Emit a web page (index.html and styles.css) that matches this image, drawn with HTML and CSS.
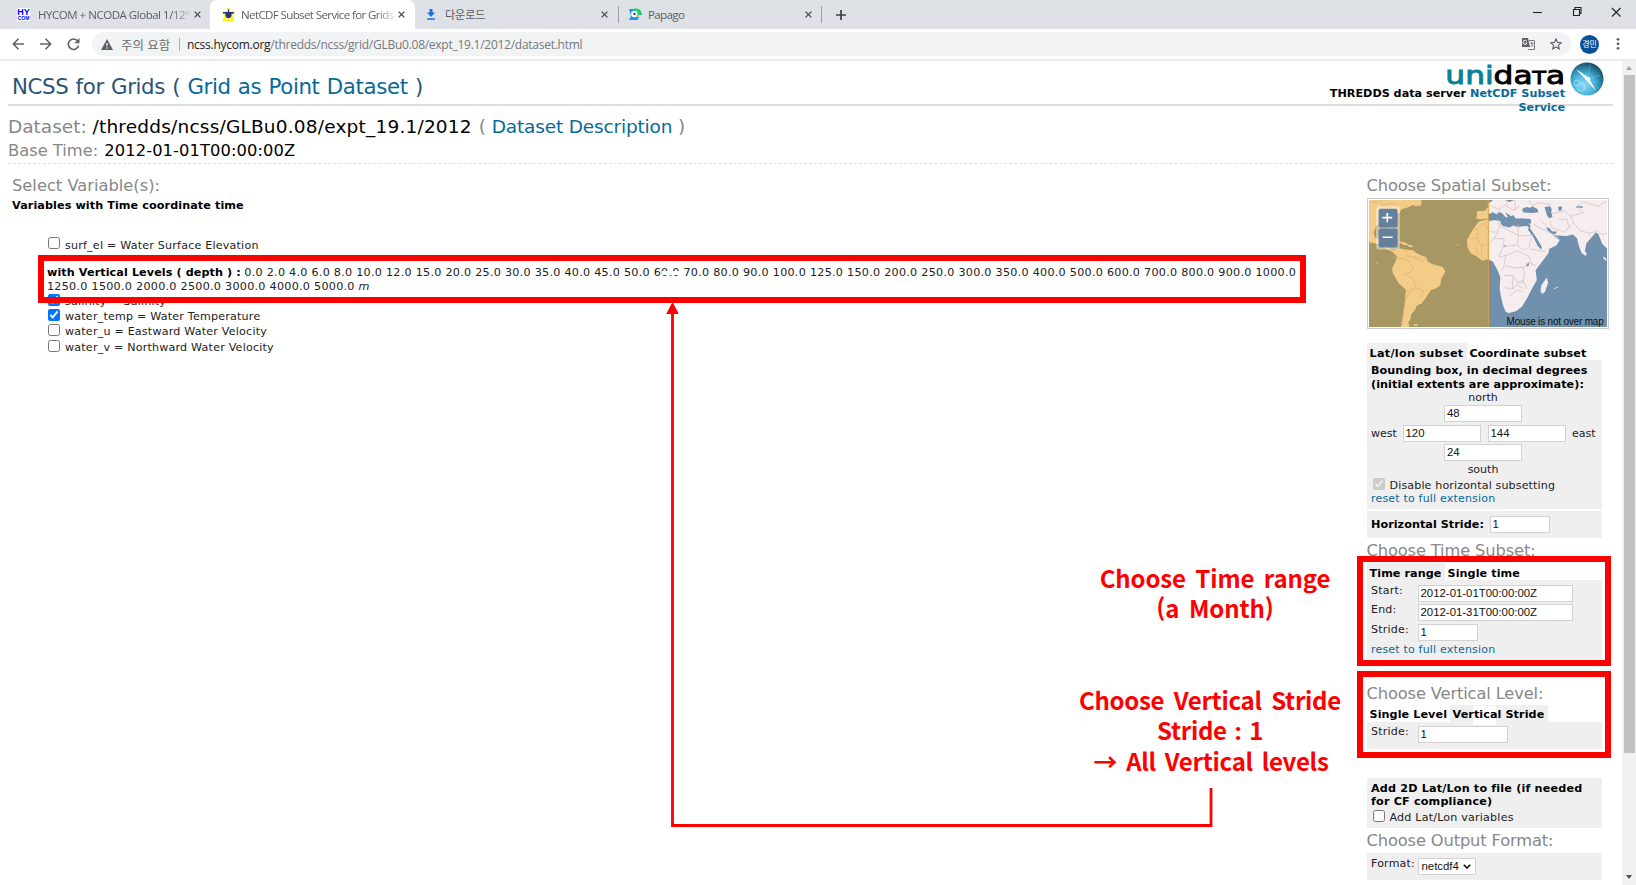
FILE: index.html
```
<!DOCTYPE html>
<html lang="ko">
<head>
<meta charset="utf-8">
<title>NetCDF Subset Service for Grids</title>
<link rel="stylesheet" href="styles.css">
</head>
<body>
<div class="tabstrip">
  <div class="btab first">
    <span class="hy"><b>HY</b><i>COM</i></span>
    <span class="btitle t1">HYCOM + NCODA Global 1/12°</span>
    <svg class="x" viewBox="0 0 8 8"><path d="M.7.7l6.6 6.6M7.3.7L.7 7.3"/></svg>
  </div>
  <div class="btab active">
    <svg class="fav" viewBox="0 0 13 13"><path d="M5 0h3l.5 3.500L13 4l-2.500 3 2 6h-12l2-6L0 4l4.500-.5z" fill="#ffee1c"/><path d="M1 4h11v1.500H9.500v2.500L8 10H5L3.500 8V5.500H1zM6 1.500h1v3H6z" fill="#26308c"/><path d="M4 11h1.500M7.500 11H9" stroke="#fff"/></svg>
    <span class="btitle t2">NetCDF Subset Service for Grids</span>
    <svg class="x" viewBox="0 0 8 8"><path d="M.7.7l6.6 6.6M7.3.7L.7 7.3"/></svg>
  </div>
  <div class="btab third">
    <svg class="dl" viewBox="0 0 8 11"><path d="M2.500 0h3v3.500H8L4 8 0 3.500h2.500zM0 9.300h8v1.500H0z" fill="#1a73e8"/></svg>
    <span class="btitle t3">다운로드</span>
    <svg class="x" viewBox="0 0 8 8"><path d="M.7.7l6.6 6.6M7.3.7L.7 7.3"/></svg>
  </div>
  <div class="btab fourth">
    <svg class="fav" viewBox="0 0 13 13"><path d="M0 1h7c4 0 6 3 5.500 6H9l1 3-2 2H0l2-4z" fill="#1296f8"/><path d="M5 .5c5-.7 8 2 7.500 6.500H7z" fill="#1dd16a"/><circle cx="5.300" cy="6" r="3.200" fill="#fff"/><circle cx="5.500" cy="6" r="1.100" fill="#114"/><path d="M7 7h3.500L8 10z" fill="#ffc400"/></svg>
    <span class="btitle t4">Papago</span>
    <svg class="x" viewBox="0 0 8 8"><path d="M.7.7l6.6 6.6M7.3.7L.7 7.3"/></svg>
  </div>
  <svg class="plus" viewBox="0 0 10 10"><path d="M5 0v10M0 5h10"/></svg>
  <svg class="winbtns" viewBox="0 0 90 12"><path d="M0 6.500h9" /><path d="M40.500 3.500h6v6h-6zM42 3.500v-2h6v6h-1.500"/><path d="M79 2l8.500 8.500M87.500 2L79 10.500"/></svg>
</div>
<div class="toolbar">
  <svg class="nav" viewBox="0 0 80 14"><path d="M12 7H1.500M6.500 1.700L1.300 7l5.200 5.300M28 7h10.500M33.500 1.700L38.700 7l-5.200 5.300"/><path d="M65.800 4.200A5.200 5.200 0 1 0 66.600 8.500"/><path d="M67.500 1v5.300h-5.200z" fill="#5f6368" stroke="none"/></svg>
  <div class="omni">
    <svg class="warn" viewBox="0 0 12 11"><path d="M6 0l6 11H0z" fill="#5f6368"/><path d="M6 4v3M6 8.200v1.200" stroke="#fff" stroke-width="1.200"/></svg>
    <span class="notice">주의 요함</span><span class="sep"></span>
    <span class="url"><b>ncss.hycom.org</b>/thredds/ncss/grid/GLBu0.08/expt_19.1/2012/dataset.html</span>
    <svg class="trans" viewBox="0 0 13 12"><path d="M0 0h6l2 9H0z" fill="#5f6368"/><path d="M7 2.500h5.500v9H6" fill="none" stroke="#777b80"/><path d="M4.800 3.300A2 2 0 1 0 5 5H3.500" fill="none" stroke="#fff"/><path d="M8 5h3.500M9.500 4v1c.5 2 1 3 2 4M11 5c-.5 2-1.500 3-3 4" fill="none" stroke="#777b80" stroke-width=".8"/></svg>
    <svg class="star" viewBox="0 0 12 12"><path d="M6 .8l1.500 3.600 3.900.3-3 2.500.9 3.800L6 9l-3.300 2 .9-3.800-3-2.500 3.900-.3z"/></svg>
  </div>
  <span class="avatar">경민</span>
  <svg class="dots" viewBox="0 0 4 14"><circle cx="2" cy="2.300" r="1.400"/><circle cx="2" cy="6.800" r="1.400"/><circle cx="2" cy="11.300" r="1.400"/></svg>
</div>
<div class="viewport">
  <div class="page">
    <header class="head">
      <h1>NCSS for Grids ( <a>Grid as Point Dataset</a> )</h1>
      <div class="brand">
        <div class="brandtext">
          <div class="logo"><span>uni</span>da<small>t</small>a</div>
          <div class="server">THREDDS data server <a>NetCDF Subset<br>Service</a></div>
        </div>
        <svg class="globe" viewBox="0 0 34 34">
          <defs><radialGradient id="g" cx=".4" cy=".68" r=".7"><stop offset="0" stop-color="#8edcf6"/><stop offset=".5" stop-color="#43b0d8"/><stop offset="1" stop-color="#174a63"/></radialGradient></defs>
          <circle cx="17" cy="17" r="16.500" fill="url(#g)"/><path d="M6 7l12.500 8.500L26 29 16 18z" fill="#fff"/><path d="M20 3l-2 13M30 13l-12 4" stroke="#8fdcf5" stroke-width=".6" opacity=".6"/><circle cx="18.500" cy="17" r="2" fill="#fff"/><circle cx="11" cy="25" r="4" fill="none" stroke="#b8ebfa" stroke-width=".6"/><circle cx="7" cy="21" r="3" fill="none" stroke="#b8ebfa" stroke-width=".6"/>
        </svg>
      </div>
    </header>
    <section class="dataset">
      <div class="ds1">Dataset: <em>/thredds/ncss/GLBu0.08/expt_19.1/2012</em> ( <a>Dataset Description</a> )</div>
      <div class="ds2">Base Time: <em>2012-01-01T00:00:00Z</em></div>
    </section>
    <div class="cols">
      <main class="vars">
        <h3 class="hd">Select Variable(s):</h3>
        <div class="vt">Variables with Time coordinate time</div>
        <label class="row surf"><input type="checkbox"><span>surf_el = Water Surface Elevation</span></label>
        <div class="levels"><b>with Vertical Levels ( depth ) :</b> <span class="lv">0.0 2.0 4.0 6.0 8.0 10.0 12.0 15.0 20.0 25.0 30.0 35.0 40.0 45.0 50.0 60.0 70.0 80.0 90.0 100.0 125.0 150.0 200.0 250.0 300.0 350.0 400.0 500.0 600.0 700.0 800.0 900.0 1000.0</span><br><span class="lv">1250.0 1500.0 2000.0 2500.0 3000.0 4000.0 5000.0 <i>m</i></span></div>
        <label class="row"><input type="checkbox" checked><span>salinity = Salinity</span></label>
        <label class="row"><input type="checkbox" checked><span>water_temp = Water Temperature</span></label>
        <label class="row"><input type="checkbox"><span>water_u = Eastward Water Velocity</span></label>
        <label class="row"><input type="checkbox"><span>water_v = Northward Water Velocity</span></label>
      </main>
      <aside class="side">
        <h3 class="hd">Choose Spatial Subset:</h3>
        <div class="map">
          <svg viewBox="55 91 716 382" preserveAspectRatio="none">
            <rect x="55" y="91" width="716" height="382" fill="#7190ad"/>
            <g fill="#f6edef">
              <path d="M55 91h160l-8 8-22 8-12 6-20 6-6 10-8 6-4 12-10 10v22l-7-6-3-9-20-2-18 6-8 20 4 16 14 6 14-4 2 12 8 5 4 14 16 6 18 2-8 6-14-4-18-8-26-16-24-4-13-6z"/>
              <path d="M141 215l18 2 16 8-14 2zM170 225l18 3-4 5-12-2zM188 92l26 4-4 12-20 2zM78 279h4v4h-4zM190 465h12v4h-12zM321 225h4v3h-4zM612 355h4v4h-4zM619 352h4v4h-4z"/>
              <path d="M122 244l25-8 16 4 24 2 13 10 12 6 14 4 6 14 14 8 30 8 9 14-12 20-4 22-14 10-14 4-14 22-14 18-14 6-6 14-10 12-4 16-6 10 4 8-4 12h-23l3-20 6-30 4-34 3-36-20-16-18-30-4-16 8-16 8-20z"/>
              <path d="M380 262l-18-10-11-18-1-24 15-26 20-28 30-8 35-4 16 14 34 8 30 2 12 14 18 32 15 24 2 4 21-4-4 14-18 24-20 26 4 30-15 26-14 28-16 26-18 14-22 5-9-4-8-20-6-26-4-24 2-34-8-20-14-26-14-8-18 5z"/>
              <path d="M378 148l2-24h22l12-12-2-21h359v146l-14-14-12-30-8-4-14 16-14 16-6 34-8-4-8-20-6-24-12-12-20 4-34-2-14-10 12 14 16 10-10 16-24 12-17 6-17-24-22-36 1-20-28-16-26-4-70 2-26 2z"/>
              <path d="M590 324l4 16-10 28-8 6-5-8 2-18zM704 244l6 8-4 8-5-6zM758 262l8 2 5 10-8-4z"/>
            </g>
            <g fill="#7190ad">
              <path d="M414 134l13-6 12 6 8-6 8 2 12 14 6-2-8-14 18 12 6-4 8 12 14-2 30 2 2 10-5 10-20 2-14 2-16-4-10 6-18-4-8-6-2-10-16-2-20 2z"/>
              <path d="M516 118l12-6 12 2 6-4 16 8 2 10-18 2-28-2zM583 112l18-2 4 10-2 6 4 16-10 4-6-8-4-12zM624 112l12-2-2 12-8 2zM464 91l28 0-14 6zM414 91h14l-12 10z"/>
              <path d="M588 172l10 4 8 10 14 0-4 8-14-4-10-8zM528 284l8-6 0 10-6 4zM460 228h8l-2 6zM678 110l20 0v4h-20z"/>
              <path d="M533 176l8 2 20 30 14 24-2 8-10-10-14-28-16-22z"/>
            </g>
            <path fill="none" stroke="#d9c5c7" stroke-width="2.500" d="M130 264l39 6 18 24-8 14-20 8M163 240l6 20 18 2 26 14 14-14M187 262l26 4M160 308l16 14 14 8 6 24-20 12-14-4M196 354l22 10-6 20M176 366l-12 30-6 40-4 34M370 182l14-6 14-14 18-8M398 162l22 24 22 2 6-20-6-18M352 206h28l4-22M380 206l14 24 22-8 16-16 10-18M380 260l-2-26M394 260v-30M414 258v-36M432 206l30 2-4 24-12 28M448 168l56 30v-34M504 198l-2 30 18 14 16-8 8-28M504 198h46M458 232l42-6M446 262l20-4 34-14 36 16 10 28M466 258l-4 30-8 16M462 288l32 8 22-4 8 24-8 26M460 318h28l12 20 20-2M488 318l-2 42-22-6M486 360l14-14 20 12M500 346l18-14 12 26M476 382l24-20 14 4M516 300l20-22 20 10M540 238l44 8M536 160l8 16M550 164l26 14 50 26M570 150l20 20M600 152l4 22 40 14 12-16-6-24-22 2M424 108l20 12 20-14 24 16 20-12M450 120l-10 12M470 106v-15M494 122v-31M536 91l10 16 24-8 32 6M606 132l36-8 20 16 40-12M662 140l8 20-22 22M670 160l20 24 28 6 22-4M700 130l-20-20 20-14 44 14 26-16M740 180l16 16 15-6M716 190l4 12M90 91l6 16 20-6 24 4M60 98h20"/>
            <rect x="55" y="91" width="359" height="382" fill="#eea000" opacity=".43"/><path d="M414 91v382" stroke="#e3a130" stroke-width="3"/>
            <rect x="76" y="110" width="72" height="130" rx="9" fill="#fff" opacity=".42"/>
            <rect x="84" y="117" width="57" height="57" rx="6" fill="#64809c"/><rect x="84" y="177" width="57" height="57" rx="6" fill="#64809c"/>
            <path d="M110 130v28M95 144h30M96 203h30" stroke="#fff" stroke-width="5"/>
          </svg>
          <span class="mouse">Mouse is not over map</span>
        </div>
        <div class="tabs g14"><b class="on w100">Lat/lon subset</b><b class="tb">Coordinate subset</b></div>
        <div class="panel bbox">
          <b class="two">Bounding box, in decimal degrees<br>(initial extents are approximate):</b>
          <div class="mid">north</div>
          <div class="irow center"><span class="inp w78">48</span></div>
          <div class="irow we"><span class="wl">west</span><span class="inp w78">120</span><span class="inp w78">144</span><span class="el">east</span></div>
          <div class="irow center"><span class="inp w78">24</span></div>
          <div class="mid south">south</div>
          <label class="row chk"><input type="checkbox" checked disabled><span>Disable horizontal subsetting</span></label>
          <a class="reset">reset to full extension</a>
        </div>
        <div class="panel hs"><b>Horizontal Stride:</b><span class="inp w60">1</span></div>
        <h3 class="hd timehd">Choose Time Subset:</h3>
        <div class="tabs g3"><b class="on w78b">Time range</b><b class="tb">Single time</b></div>
        <div class="panel time">
          <div class="frow"><span>Start:</span><span class="inp w155">2012-01-01T00:00:00Z</span></div>
          <div class="frow"><span>End:</span><span class="inp w155">2012-01-31T00:00:00Z</span></div>
          <div class="frow"><span>Stride:</span><span class="inp w60">1</span></div>
          <a class="reset">reset to full extension</a>
        </div>
        <h3 class="hd vhd">Choose Vertical Level:</h3>
        <div class="tabs g2"><b class="off">Single Level</b><b class="on vs"><i class="patch"></i><span>Vertical Stride</span></b></div>
        <div class="panel vert"><div class="frow"><span>Stride:</span><span class="inp w90">1</span></div></div>
        <div class="panel add"><b class="two">Add 2D Lat/Lon to file (if needed<br>for CF compliance)</b>
          <label class="row chk"><input type="checkbox"><span>Add Lat/Lon variables</span></label></div>
        <h3 class="hd ohd">Choose Output Format:</h3>
        <div class="panel fmt"><div class="frow"><span>Format:</span><span class="inp sel">netcdf4<svg viewBox="0 0 8 5"><path d="M.8.8L4 4 7.200.8"/></svg></span></div></div>
      </aside>
    </div>
  </div>
  <div class="scroll"><svg class="arr" viewBox="0 0 6 4"><path d="M3 0l3 4H0z" fill="#a3a3a3"/></svg><div class="thumb"></div><svg class="arr dn" viewBox="0 0 6 4"><path d="M3 4l3-4H0z" fill="#505050"/></svg></div>
</div>
<div class="smudge"></div>
<div class="redbox rb1"></div>
<div class="redbox rb2"></div>
<div class="redbox rb3"></div>
<div class="note n1"><span>Choose Time range</span><span>(a Month)</span></div>
<div class="note n2"><span>Choose Vertical Stride</span><span class="s1">Stride <i>:</i> 1</span><span class="s2">→ All Vertical levels</span></div>
<svg class="arrow" viewBox="0 0 560 540"><path d="M551 486v37.500H12.500V12" fill="none" stroke="#f00" stroke-width="2.800"/><path d="M12.500 0l6.300 12H6.200z" fill="#f00"/></svg>
</body>
</html>
```
FILE: styles.css
```
* { box-sizing: border-box; }
body { margin: 0; width: 1636px; height: 885px; overflow: hidden; position: relative; background: #fff; font-family: "DejaVu Sans", Verdana, sans-serif; font-size: 11px; color: #222; white-space: nowrap; }
svg { display: block; flex: none; }
a { color: #07699a; }
b { color: #000; }

/* browser tabs */
.tabstrip { height: 29px; background: #dee1e6; display: flex; align-items: center; font-family: "Open Sans", "Noto Sans CJK KR", sans-serif; font-size: 11.5px; color: #5a5e63; }
.btab { height: 29px; display: flex; align-items: center; }
.btitle { line-height: 18px; flex: none; }
.x { width: 7px; height: 7px; stroke: #45494d; stroke-width: 1.5; fill: none; margin-left: auto; }
.first { width: 210px; padding: 0 9px 0 17px; }
.hy { width: 13px; height: 13px; background: #fff; color: #00f; text-align: center; display: flex; flex-direction: column; flex: none; }
.hy b { color: #00f; font: bold 9px/8px "Liberation Sans", sans-serif; }
.hy i { font: bold 5px/5px "Liberation Sans", sans-serif; }
.t1 { margin-left: 8px; letter-spacing: -.47px; -webkit-mask-image: linear-gradient(90deg, #000 88%, #0003); }
.active { width: 205px; background: #fff; border-radius: 7px 7px 0 0; padding: 0 10px 0 12px; }
.fav { width: 13px; height: 13px; }
.t2 { margin-left: 6px; letter-spacing: -.6px; -webkit-mask-image: linear-gradient(90deg, #000 88%, #0003); }
.third { width: 204px; padding: 0 10px 0 12px; border-right: 1px solid #9a9da2; height: 17px; }
.dl { width: 8px; height: 11px; }
.t3 { margin-left: 10px; font-size: 11px; }
.fourth { width: 203px; padding: 0 9px 0 10px; border-right: 1px solid #9a9da2; height: 17px; }
.t4 { margin-left: 6px; letter-spacing: -.6px; }
.plus { width: 10px; height: 10px; margin-left: 14px; stroke: #3c4043; stroke-width: 1.7; }
.winbtns { width: 90px; height: 12px; margin-left: auto; margin-right: 13px; margin-top: -5px; fill: none; stroke: #222; stroke-width: 1.1; }

/* address bar */
.toolbar { height: 32px; border-bottom: 2px solid #e9eaed; display: flex; align-items: center; font-family: "Open Sans", "Noto Sans CJK KR", sans-serif; }
.nav { width: 80px; height: 14px; margin-left: 12px; fill: none; stroke: #5f6368; stroke-width: 1.6; }
.omni { width: 1479px; height: 24px; border-radius: 12px; background: #f1f3f4; display: flex; align-items: center; padding-left: 9px; font-size: 12px; color: #77797c; }
.warn { width: 12px; height: 11px; }
.notice { margin-left: 8px; width: 58px; font-size: 12.5px; color: #6b6e72; }
.sep { width: 1px; height: 13px; background: #aaacb0; }
.url { margin-left: 7px; letter-spacing: -.26px; }
.url b { font-weight: 400; color: #222; }
.trans { width: 13px; height: 12px; margin-left: auto; }
.star { width: 12px; height: 12px; margin: 0 9px 0 15px; fill: none; stroke: #5f6368; stroke-width: 1.1; }
.avatar { width: 19px; height: 19px; border-radius: 50%; background: #06519c; color: #fff; font-size: 8px; line-height: 18px; text-align: center; margin-left: 9px; }
.dots { width: 4px; height: 14px; margin-left: 17px; fill: #5f6368; }

/* page */
.viewport { height: 824px; display: flex; justify-content: space-between; }
.page { width: 1613px; padding-left: 8px; display: flex; flex-direction: column; }
.head { height: 44.5px; border-bottom: 2px solid #dcdcdc; display: flex; justify-content: space-between; }
h1 { margin: 13px 0 0 4px; font-weight: 400; font-size: 21.3px; line-height: 26px; color: #2b5375; letter-spacing: -.36px; word-spacing: .8px; }
.brand { display: flex; height: 52px; margin-right: 9px; }
.brandtext { text-align: right; }
.logo { font-size: 24px; line-height: 24px; height: 26px; color: #000; transform: translateY(2.5px) scaleX(1.3); transform-origin: right; -webkit-text-stroke: .9px; }
.logo span { color: #087f9c; }
.logo small { font-size: 24px; font-variant: small-caps; }
.server { font-weight: bold; font-size: 11.2px; line-height: 13.5px; color: #000; }
.globe { width: 34px; height: 34px; margin: 1px 0 0 5px; }
.dataset { height: 58.5px; border-bottom: 1px dashed #e0e0e0; color: #888; }
.dataset em { font-style: normal; color: #000; }
.ds1 { font-size: 18.5px; line-height: 24px; padding-top: 9.5px; }
.ds1 em { letter-spacing: .2px; margin-right: 1px; }
.ds1 a { letter-spacing: -.17px; }
.ds2 { font-size: 16.3px; line-height: 20px; padding-top: 2px; }
.ds2 em { letter-spacing: .1px; margin-left: 1px; }
.cols { display: flex; justify-content: space-between; height: 721px; }
.hd { margin: 0; font-weight: 400; font-size: 16.3px; line-height: 22px; height: 20px; color: #888; }
.side .hd { letter-spacing: -.14px; }
.vars { padding: 11px 0 0 4px; }
.vt { font-weight: bold; color: #000; font-size: 11.2px; line-height: 14px; margin-top: 4px; letter-spacing: .09px; }
.row { display: flex; height: 15.3px; margin-left: 36px; line-height: 14px; }
.row input { width: 12px; height: 12px; margin: 0 5px 0 0; flex: none; }
.row span { padding-top: 1px; font-size: 11.1px; letter-spacing: .21px; }
.surf { margin-top: 24px; }
.surf span { padding-top: 2px; }
.levels { margin: 14px 0 0 35px; line-height: 14px; font-size: 11.2px; height: 27.5px; }
.levels b { letter-spacing: .09px; }
.lv { letter-spacing: .257px; }

.side { width: 246.5px; padding-top: 11px; display: flex; flex-direction: column; align-items: flex-start; color: #222; }
.map { width: 242px; height: 131px; margin-top: 3px; border: 1px solid #ccc; padding: 1px; position: relative; }
.map svg { width: 238px; height: 127px; }
.mouse { position: absolute; right: 4px; bottom: 0; font: 10px/12px "Liberation Sans", sans-serif; letter-spacing: -.2px; color: #111; }
.tabs { display: flex; height: 17px; line-height: 14px; font-size: 11.2px; }
.tabs b { height: 17px; padding: 3.500px 0 0 3px; position: relative; letter-spacing: .08px; }
.on { background: #efefef; }
.tabs .w100 { width: 100px; letter-spacing: .3px; } .w78b { width: 78px; } .vs { width: 98px; } .off { width: 83px; }
.vs span { position: relative; }
.patch { position: absolute; left: 23px; top: 1px; width: 23px; height: 19px; background: #fff; }
.g14 { margin-top: 14px; } .g3 { margin-top: 3px; } .g2 { margin-top: 2px; }
.panel { width: 235px; background: #efefef; padding-left: 4.500px; }
.two { display: block; font-size: 11.2px; line-height: 13.6px; letter-spacing: .06px; }
.bbox { height: 149px; padding-top: 4px; }
.mid { width: 224px; text-align: center; line-height: 14px; }
.irow { height: 17px; display: flex; line-height: 17px; margin-bottom: 2.5px; }
.center { justify-content: center; width: 224px; }
.inp { display: block; height: 17px; border: 1.500px solid #d2d2d2; background: #fff; font: 11.4px/15px "Liberation Sans", sans-serif; padding-left: 2px; color: #111; }
.w78 { width: 78px; margin-right: 7px; } .w60 { width: 60px; } .w155 { width: 155px; } .w90 { width: 90px; }
.center .w78 { margin-right: 0; }
.wl { width: 31.5px; }
.we .inp + .inp { margin-right: 6.5px; }
.south { margin-top: -1px; }
.chk { height: 14px; margin: 1px 0 0 1.500px; line-height: 13px; }
.row.chk span { letter-spacing: .13px; }
.add .row.chk span { letter-spacing: .2px; }
.bbox .chk { margin-top: 1px; }
.reset { display: block; line-height: 14px; letter-spacing: .19px; }
.hs { height: 27px; margin-top: 1.5px; display: flex; align-items: center; font-size: 11.2px; letter-spacing: .05px; }
.hs .inp { margin-left: auto; margin-right: 52px; }
.timehd { margin-top: 2.5px; }
.time { height: 79px; padding-top: 4.500px; }
.frow { display: flex; height: 19.500px; line-height: 14px; }
.frow span:first-child { width: 46.5px; margin-top: -1px; letter-spacing: .22px; }
.vhd { margin-top: 23.5px; }
.vert { height: 27px; padding-top: 4.500px; }
.add { height: 50px; margin-top: 29px; padding-top: 4px; }
.add .two { letter-spacing: .17px; }
.ohd { margin-top: 2.5px; }
.fmt { height: 27px; margin-top: 3px; padding-top: 5px; }
.sel { width: 58px; padding-left: 3px; display: flex; align-items: center; }
.sel svg { width: 8px; height: 5px; margin-left: 4px; fill: none; stroke: #111; stroke-width: 1.6; }

.scroll { width: 14px; height: 824px; background: #f1f1f1; display: flex; flex-direction: column; align-items: center; padding-top: 5px; }
.arr { width: 6px; height: 4px; }
.thumb { width: 11px; height: 678px; margin-top: 5px; background: #c1c1c1; }
.dn { margin-top: auto; margin-bottom: 6px; }

/* annotations laid over the page */
.redbox { position: absolute; border: 6px solid #f00; }
.rb1 { left: 38px; top: 255px; width: 1268px; height: 48px; }
.rb2 { left: 1357px; top: 556px; width: 254px; height: 110px; }
.rb3 { left: 1357px; top: 671px; width: 254px; height: 87px; }
.smudge { position: absolute; left: 662px; top: 271px; width: 20px; height: 4px; background: #fff; }
.note { position: absolute; display: flex; flex-direction: column; align-items: center; color: #f00; font: bold 24px/30px "Noto Sans CJK KR", sans-serif; width: 300px; letter-spacing: -.12px; word-spacing: 3px; }
.note i { font-family: "Noto Sans", sans-serif; font-style: normal; }
.n1 { left: 1065px; top: 563px; }
.n2 { left: 1060px; top: 685px; letter-spacing: -.28px; }
.s1 { word-spacing: 1.5px; }
.s2 { transform: translateX(1px); word-spacing: 2.5px; }
.arrow { position: absolute; left: 660px; top: 302px; width: 560px; height: 540px; }
```
